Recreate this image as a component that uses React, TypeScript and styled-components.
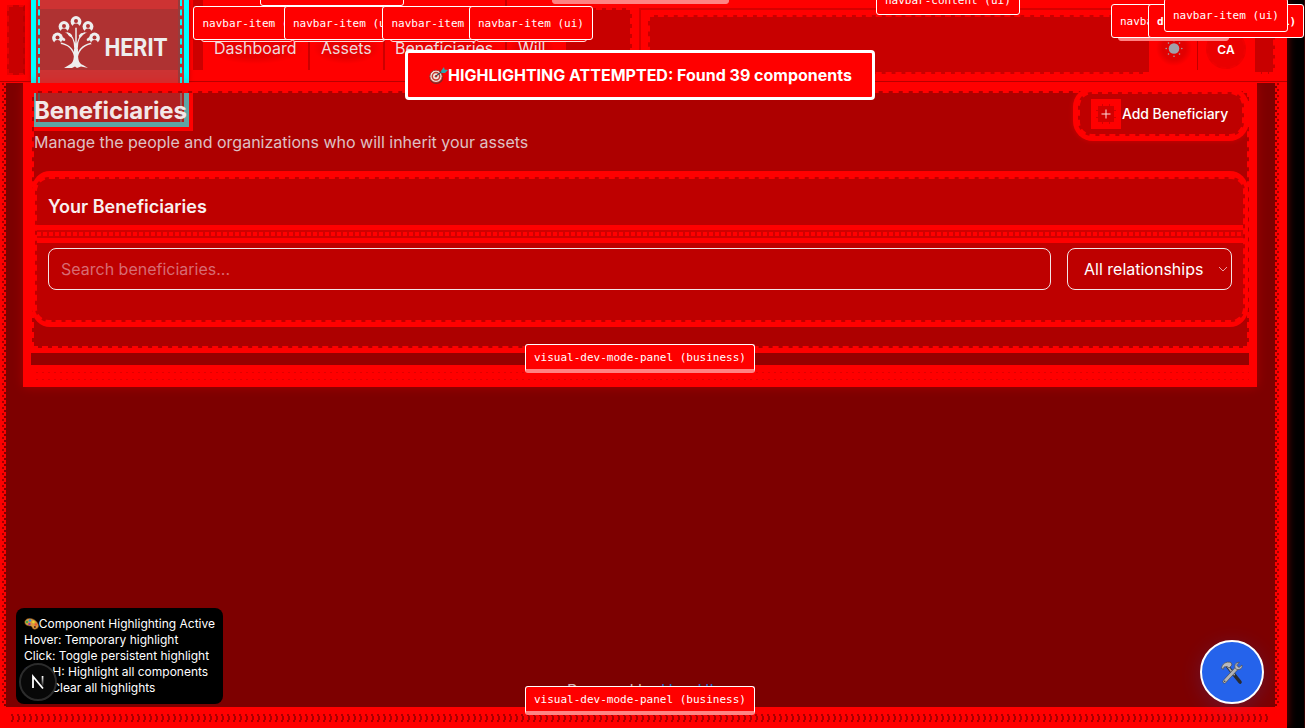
import React from "react";
import styled, { createGlobalStyle, css } from "styled-components";

const Global = createGlobalStyle`
  *{box-sizing:border-box}
  body{margin:0;background:#000;overflow:hidden;font-family:Inter,"Liberation Sans",sans-serif;color:#ecedee}
  h1,h2,p{margin:0}
`;

const Page = styled.div`
  position: relative;
  width: 1305px;
  height: 728px;
  overflow: hidden;
  background: #000;
  border-right: 1px solid #300;
`;
const Shell = styled.div`
  width: 1287px;
  height: 728px;
  display: flex;
  flex-direction: column;
  background: #7d0000;
  box-shadow: 0 0 9px rgba(255, 0, 0, 0.5);
`;
const Middle = styled.div`
  display: flex;
  height: 624px;
`;
const Rail = styled.div<{ $w: number; $right?: boolean }>`
  width: ${(p) => p.$w}px;
  flex: none;
  margin-left: ${(p) => (p.$right ? "auto" : 0)};
  background-color: #f00;
  background-image: repeating-linear-gradient(#a00000 0 2px, transparent 2px 6px),
    repeating-linear-gradient(transparent 0 3px, #7d0000 3px 5px, transparent 5px 6px);
  background-size: 2px 100%, 2px 100%;
  background-repeat: no-repeat;
  background-position: ${(p) => (p.$right ? "2px 0, 0 0" : "2px 0, 4px 0")};
`;
const BottomRail = styled.div`
  height: 21px;
  background-color: #f00;
  background-image: repeating-linear-gradient(90deg, transparent 0 3px, #a80000 3px 5px, transparent 5px 6px),
    repeating-linear-gradient(90deg, transparent 0 4px, #a80000 4px 6px),
    repeating-linear-gradient(90deg, transparent 0 3px, #a80000 3px 5px, transparent 5px 6px);
  background-size: 1261px 2px, 1261px 4px, 1261px 2px;
  background-repeat: no-repeat;
  background-position: 8px 7px, 8px 9px, 8px 13px;
`;

const Header = styled.header`
  height: 83px;
  flex: none;
  display: flex;
  align-items: flex-start;
  background: linear-gradient(#f00 81px, #b00000 81px 82px, #f00 82px);
`;
const StartCell = styled.div`
  width: 18px;
  height: 70px;
  margin: 5px 6px 0 7px;
  background: #c80000;
  border: 2px dashed #e80000;
  border-right-color: #b80000;
`;
const LogoBox = styled.div`
  width: 158px;
  height: 83px;
  padding: 0 2px;
  border: solid #0ff;
  border-width: 0 5px;
  background: linear-gradient(#cd3333 9px, #af3232 9px 70px, #cd3333 70px);
  box-shadow: 0 0 5px rgba(120, 0, 0, 0.4);
`;
const LogoInner = styled.div`
  height: 83px;
  border: dashed #0ff;
  border-width: 0 2px;
  background: linear-gradient(90deg, #963c3c 0 2px, transparent 2px 140px, #963c3c 140px) -2px 0;
  display: flex;
  padding: 15px 0 0 10px;
`;
const Nav = styled.nav`
  display: flex;
  gap: 2px;
  height: 70px;
  margin-left: 4px;
  padding-left: 10px;
  background: #cc0000;
  width: 363px;
  flex: none;
`;
const NavItem = styled.span<{ $w: number }>`
  width: ${(p) => p.$w}px;
  flex: none;
  padding: 38px 0 0 ${(p) => (p.$w > 110 ? 10 : 11)}px;
  font-size: 16px;
  line-height: 20px;
  color: #f0dadc;
  background: radial-gradient(ellipse 46% 16px at 50% 48px, #e60000 60%, #f00 100%);
`;
const SlotPanel = styled.div`
  margin: 8px 0 0 10px;
  width: 66px;
  height: 66px;
  background: #c80000;
  border: 2px dashed #f00;
  border-left: 0;
`;
const EndPanel = styled.div`
  margin: 15px 0 0 16px;
  width: 501px;
  height: 59px;
  border: 2px dashed #f00;
  border-right: 0;
  background: #c80000;
  box-shadow: -8px -6px 0 -1px #f00, -9px -7px 0 0 #d80000;
`;
const ThemeCell = styled.div`
  width: 49px;
  height: 70px;
  padding: 38px 0 0 15px;
  background: radial-gradient(circle 18px at 25px 48px, #e20000 65%, #f00);
  border-right: 1px solid #c00000;
`;
const Avatar = styled.div`
  width: 40px;
  height: 40px;
  margin: 29px 8px 0 8px;
  display: grid;
  place-items: center;
  border-radius: 50%;
  border: 2px dashed #f00000;
  background: #ea0000;
  color: #fff;
  font-size: 12px;
  font-weight: 600;
`;
const Tail = styled.div`
  width: 20px;
  height: 63px;
  margin: 11px 0 0 1px;
  background: #c80000;
  border: dashed #f00;
  border-width: 0 2px 2px 0;
`;

const Main = styled.main`
  width: 1234px;
  height: 304px;
  margin-left: 17px;
  padding: 8px 8px 0 9px;
  background: #f00;
  box-shadow: 0 0 10px rgba(255, 0, 0, 0.32);
`;
const Section = styled.section`
  height: 257px;
  border: 2px dashed #f00;
  background: #ad0000;
`;
const Top = styled.div`
  display: flex;
  justify-content: space-between;
  height: 78px;
`;
const TitleBox = styled.div`
  height: 38px;
  width: 159px;
  border: solid #f00;
  border-width: 0 4px 4px 0;
`;
const Title = styled.h1`
  width: 155px;
  height: 34px;
  font-size: 24px;
  line-height: 35px;
  font-weight: 700;
  letter-spacing: -0.12px;
  color: #f3e7e8;
  border: solid #5fa5a5;
  border-width: 0 5px 5px 0;
  background: linear-gradient(90deg, #5fa5a5 0 2px, #b02020 2px 4px, #5f5555 4px 6px, #b02020 6px 146px, #965f5f 146px 148px, #b02020 148px);
  white-space: nowrap;
`;
const Subtitle = styled.p`
  margin-top: 1px;
  font-size: 16px;
  line-height: 20px;
  color: #dfc0c4;
`;
const AddButton = styled.div`
  width: 176px;
  height: 54px;
  margin: -6px -2px 0 0;
  padding: 5px;
  border-radius: 20px;
  background: #f00;
  box-shadow: 0 0 5px rgba(255, 0, 0, 0.45);
`;
const AddInner = styled.div`
  height: 44px;
  border: 2px dashed #f00;
  border-radius: 14px;
  background: #be0000;
  display: flex;
  align-items: center;
  padding: 0 0 1px 11px;
  gap: 1px;
  color: #fff;
  font-size: 14px;
  font-weight: 500;
  letter-spacing: -0.06px;
  white-space: nowrap;
`;
const PlusBox = styled.span`
  width: 30px;
  height: 30px;
  flex: none;
  padding: 5px;
  background: #f00;
  svg {
    display: block;
    border: 2px dashed #f00;
    background: #d20000;
  }
`;
const Card = styled.div`
  height: 156px;
  margin: 0 -1px 0 -2px;
  padding: 6px 3px 5px;
  background: #f00;
  border-radius: 18px;
`;
const CardInner = styled.div`
  height: 145px;
  border: 2px dashed #f00;
  border-radius: 14px;
  background: #be0000;
`;
const CardTitle = styled.h2`
  height: 46px;
  padding: 17px 12px 0 11px;
  font-size: 18px;
  line-height: 22px;
  font-weight: 600;
  color: #f8efef;
`;
const Divider = styled.div`
  height: 18px;
  background: linear-gradient(#f00 5px, transparent 5px 13px, #f00 13px),
    linear-gradient(#d00000 7px, transparent 7px 11px, #d00000 11px),
    repeating-linear-gradient(90deg, #f00 0 4px, #d00000 4px 6px);
`;
const Filters = styled.div`
  display: flex;
  gap: 16px;
  padding: 5px 0 0 11px;
`;
const Field = styled.div<{ $w: number; $muted?: boolean }>`
  width: ${(p) => p.$w}px;
  height: 42px;
  display: flex;
  align-items: center;
  justify-content: space-between;
  border: 1px solid #f3e5e6;
  border-radius: 8px;
  font-size: 16px;
  padding: 0 3px 0 ${(p) => (p.$muted ? 12 : 16.5)}px;
  color: ${(p) => (p.$muted ? "#d76b73" : "#fff")};
`;
const Gutter = styled.div`
  height: 12px;
  margin: 5px -2px 0 -3px;
  border: dashed #f00;
  border-width: 0 2px;
  background: #960000;
`;
const Dots = styled.div`
  height: 22px;
  background: repeating-linear-gradient(90deg, transparent 0 4px, #e00000 4px 6px) 0 7px / 100% 1px no-repeat,
    repeating-linear-gradient(90deg, transparent 0 4px, #e00000 4px 6px) 0 14px / 100% 1px no-repeat;
`;
const Footer = styled.footer`
  margin-top: 293px;
  padding-left: 561px;
  font-size: 16px;
  line-height: 20px;
  color: #d4b0b4;
  white-space: pre;
  b {
    font-weight: 400;
    color: #1765d6;
  }
`;

const Tag = styled.span<{ $x: number; $y: number; $w: number; $h?: number; $bold?: boolean; $strip?: boolean }>`
  position: absolute;
  left: ${(p) => p.$x}px;
  top: ${(p) => p.$y}px;
  width: ${(p) => p.$w}px;
  height: ${(p) => p.$h ?? 34}px;
  padding-left: 8px;
  display: flex;
  align-items: center;
  border: 1px solid #fff;
  border-radius: 3px;
  background: #f00;
  color: #fff;
  font: ${(p) => (p.$bold ? 700 : 400)} 11px "DejaVu Sans Mono", monospace;
  white-space: pre;
  ${(p) =>
    p.$strip &&
    css`
      border-bottom: 4px solid #ff8282;
    `}
`;
const Under = styled.span<{ $x: number; $y: number; $w: number; $pink?: boolean }>`
  position: absolute;
  left: ${(p) => p.$x}px;
  top: ${(p) => p.$y}px;
  width: ${(p) => p.$w}px;
  height: 8px;
  border: 1px solid ${(p) => (p.$pink ? "#ff8282" : "#ffdede")};
  border-radius: 3px;
  background: ${(p) => (p.$pink ? "#ff8282" : "#f00")};
`;
const Toast = styled.div`
  position: absolute;
  left: 405px;
  top: 50px;
  width: 470px;
  height: 50px;
  display: flex;
  align-items: center;
  padding-left: 20px;
  border: 3px solid #fff;
  border-radius: 4px;
  background: #f00;
  color: #fff;
  font-size: 16px;
  font-weight: 700;
  white-space: nowrap;
  svg {
    flex: none;
  }
`;
const Help = styled.div`
  position: absolute;
  left: 16px;
  top: 608px;
  width: 207px;
  height: 96px;
  padding: 8px;
  border-radius: 8px;
  background: #000;
  color: #fff;
  font-size: 12px;
  line-height: 16px;
  white-space: nowrap;
`;
const HelpRow = styled.div`
  display: flex;
  height: 16px;
  align-items: center;
`;
const DevBadge = styled.div`
  position: absolute;
  left: 19px;
  top: 663px;
  width: 38px;
  height: 38px;
  display: grid;
  place-items: center;
  border-radius: 50%;
  border: 2px solid #2c2c2c;
  background: #080808;
`;
const Fab = styled.div`
  position: absolute;
  left: 1200px;
  top: 640px;
  width: 64px;
  height: 64px;
  display: grid;
  place-items: center;
  border-radius: 50%;
  border: 2px solid #fff;
  background: #2563eb;
  box-shadow: 0 4px 20px rgba(37, 99, 235, 0.2);
`;

const heads = [
  [7.5, 22],
  [14, 10.5],
  [26, 5.5],
  [38, 10.5],
  [44.5, 22],
];
const Tree = () => (
  <svg width="118" height="56" viewBox="0 0 118 56" fill="none">
    <g stroke="#eee" strokeWidth="1.5" strokeLinecap="round">
      <path d="M26 13V44M25 42C23 34 19 29 9 28M27 42C29 34 34 29 44 28M25 34C25 25 21 19 16 17M27 34C27 25 31 19 36 17" />
    </g>
    <path d="M24 34H28C28 44 28 48 33 50L38 53L31 51.5L27 53L25 51.5L22 53L14 53L19 50C24 48 24 43 24 34Z" fill="#eee" />
    <g fill="#eee">
      {[[20, 20, 40], [31, 20, -40], [13, 24, 30], [39, 24, -30]].map(([x, y, r], i) => (
        <ellipse key={i} cx={x} cy={y} rx="2.6" ry="1.4" transform={`rotate(${r} ${x} ${y})`} />
      ))}
      {heads.map(([x, y], i) => (
        <g key={i}>
          <circle cx={x} cy={y + 1} r="5.4" />
          <circle cx={x} cy={y + 0.5} r="2" fill="#af3232" />
          <path d={`M${x - 3.4} ${y + 7}a3.4 4 0 0 1 6.8 0z`} fill="#af3232" />
        </g>
      ))}
    </g>
    <text x="54.5" y="40.5" fill="#eee" fontFamily="Roboto, sans-serif" fontWeight="700" fontSize="26.5" textLength="63" lengthAdjust="spacingAndGlyphs">
      HERIT
    </text>
  </svg>
);
const Sun = () => (
  <svg width="20" height="20" viewBox="0 0 20 20" fill="#a1a1aa">
    <circle cx="10" cy="10.5" r="5.3" />
    {[0, 45, 90, 135, 180, 225, 270, 315].map((a) => (
      <circle key={a} cx="10" cy="2.7" r=".8" transform={`rotate(${a} 10 10.5)`} />
    ))}
  </svg>
);
const Dart = () => (
  <svg width="20" height="20" viewBox="0 0 20 20">
    <circle cx="8.3" cy="12" r="7" fill="#7b2923" />
    <circle cx="8" cy="11.3" r="6.2" fill="#eee5dc" stroke="#b32b25" strokeWidth="1" />
    <circle cx="8" cy="11.3" r="3.7" fill="#f4e8df" stroke="#c43b32" strokeWidth="1.5" />
    <circle cx="8" cy="11.3" r="1.2" fill="#bd3028" />
    <path d="M8 11L16 5" stroke="#394b50" strokeWidth="1.2" />
    <path d="M13 6L16 2L16.5 4.5L20 5L17 8L13.5 8Z" fill="#2aa7ad" />
  </svg>
);
const Palette = () => (
  <svg width="15" height="14" viewBox="0 0 15 14">
    <path d="M1 4C3 0 9 1 12 4C15 7 16 11 12 12C8 13 9 10 7 9C4 9 0 8 1 4Z" fill="#d99a3d" stroke="#8d5522" strokeWidth=".6" />
    <circle cx="3" cy="5" r="1.3" fill="#41a74a" />
    <circle cx="6" cy="3.5" r="1.3" fill="#268fe8" />
    <circle cx="9.5" cy="5" r="1.3" fill="#e8d92e" />
    <circle cx="12" cy="7.5" r="1.2" fill="#ee532e" />
    <circle cx="5.5" cy="7" r="1.2" fill="#8d36b0" />
    <circle cx="11" cy="10" r="1" fill="#4b1d15" />
  </svg>
);
const Tools = () => (
  <svg width="24" height="25" viewBox="0 0 24 25" fill="none" strokeLinecap="round">
    <path d="M8 7L20 22" stroke="#292b2f" strokeWidth="3.6" />
    <path d="M8 7L14 14.5" stroke="#a7a9ad" strokeWidth="2" />
    <path d="M1.5 8C2 4 6 1 11 2.5L12 5L9 8L7 6.5L4 7L3.5 9Z" fill="#b9babd" stroke="#54565b" strokeWidth=".8" />
    <path d="M17 8L4.5 21.5" stroke="#4c4e54" strokeWidth="4" />
    <path d="M17 8L4.5 21.5" stroke="#b2b4b8" strokeWidth="2.7" />
    <path d="M19 2.2C15 2.2 14 6 15.5 8.5C18 11 23 9 22 5L19 7.5L16.8 5.5Z" fill="#b8babe" stroke="#54565b" strokeWidth=".8" />
    <circle cx="4.7" cy="21.2" r=".8" fill="#444" />
  </svg>
);

export default function App() {
  return (
    <Page>
      <Global />
      <Shell>
        <Header>
          <StartCell />
          <LogoBox>
            <LogoInner>
              <Tree />
            </LogoInner>
          </LogoBox>
          <Nav>
            <NavItem $w={105}>Dashboard</NavItem>
            <NavItem $w={73}>Assets</NavItem>
            <NavItem $w={120}>Beneficiaries</NavItem>
            <NavItem $w={49}>Will</NavItem>
          </Nav>
          <SlotPanel />
          <EndPanel />
          <ThemeCell>
            <Sun />
          </ThemeCell>
          <Avatar>CA</Avatar>
          <Tail />
        </Header>
        <Middle>
          <Rail $w={6} />
          <div>
            <Main>
              <Section>
                <Top>
                  <div>
                    <TitleBox>
                      <Title>Beneficiaries</Title>
                    </TitleBox>
                    <Subtitle>Manage the people and organizations who will inherit your assets</Subtitle>
                  </div>
                  <AddButton>
                    <AddInner>
                      <PlusBox>
                        <svg width="20" height="20" viewBox="0 0 16 16" stroke="#ffdede">
                          <path d="M8 3.5v9M3.5 8h9" />
                        </svg>
                      </PlusBox>
                      Add Beneficiary
                    </AddInner>
                  </AddButton>
                </Top>
                <Card>
                  <CardInner>
                    <CardTitle>Your Beneficiaries</CardTitle>
                    <Divider />
                    <Filters>
                      <Field $w={1002.5} $muted>
                        Search beneficiaries...
                      </Field>
                      <Field $w={165.5}>
                        All relationships
                        <svg width="10" height="6" viewBox="0 0 10 6" fill="none" stroke="#e7a1a5">
                          <path d="M1 1l4 4 4-4" />
                        </svg>
                      </Field>
                    </Filters>
                  </CardInner>
                </Card>
              </Section>
              <Gutter />
              <Dots />
            </Main>
            <Footer>
              Powered by <b>HeroUI</b>
            </Footer>
          </div>
          <Rail $w={12} $right />
        </Middle>
        <BottomRail />
      </Shell>

      <Tag $x={260} $y={-28} $w={144}>navbar-content (ui)</Tag>
      <Under $x={552} $y={-4} $w={177} $pink />
      <Tag $x={876} $y={-14} $w={144} $h={29}>navbar-content (ui)</Tag>
      <Under $x={201} $y={34} $w={92} />
      <Under $x={292} $y={34} $w={93} />
      <Under $x={390} $y={34} $w={87} />
      <Under $x={476} $y={34} $w={111} />
      {[193.4, 284, 382.4, 469].map((x) => (
        <Tag key={x} $x={x} $y={6} $w={124}>
          navbar-item (ui)
        </Tag>
      ))}
      <Under $x={1118} $y={33} $w={111} $pink />
      <Tag $x={1111} $y={4} $w={124}>navbar-item (ui)</Tag>
      <Tag $x={1148} $y={4} $w={156} $bold>dropdown-trigger (ui)</Tag>
      <Tag $x={1164} $y={-2} $w={124}>navbar-item (ui)</Tag>
      <Toast>
        <Dart />
        HIGHLIGHTING ATTEMPTED: Found 39 components
      </Toast>
      <Tag $x={525} $y={344} $w={230} $h={29} $strip>visual-dev-mode-panel (business)</Tag>
      <Tag $x={525} $y={686} $w={230} $h={29} $strip>visual-dev-mode-panel (business)</Tag>
      <Help>
        <HelpRow>
          <Palette />
          Component Highlighting Active
        </HelpRow>
        <HelpRow>Hover: Temporary highlight</HelpRow>
        <HelpRow>Click: Toggle persistent highlight</HelpRow>
        <HelpRow>Ctrl+H: Highlight all components</HelpRow>
        <HelpRow>Esc: Clear all highlights</HelpRow>
      </Help>
      <DevBadge>
        <svg width="16" height="16" viewBox="0 0 16 16" fill="none">
          <defs>
            <linearGradient id="fade" x2="0" y2="1">
              <stop stopColor="#fff" />
              <stop offset="1" stopColor="#fff" stopOpacity=".1" />
            </linearGradient>
          </defs>
          <path d="M3 14V2.5L13 14.5" stroke="#fff" strokeWidth="1.8" />
          <rect x="11.7" y="2" width="1.7" height="10" fill="url(#fade)" />
        </svg>
      </DevBadge>
      <Fab>
        <Tools />
      </Fab>
    </Page>
  );
}
